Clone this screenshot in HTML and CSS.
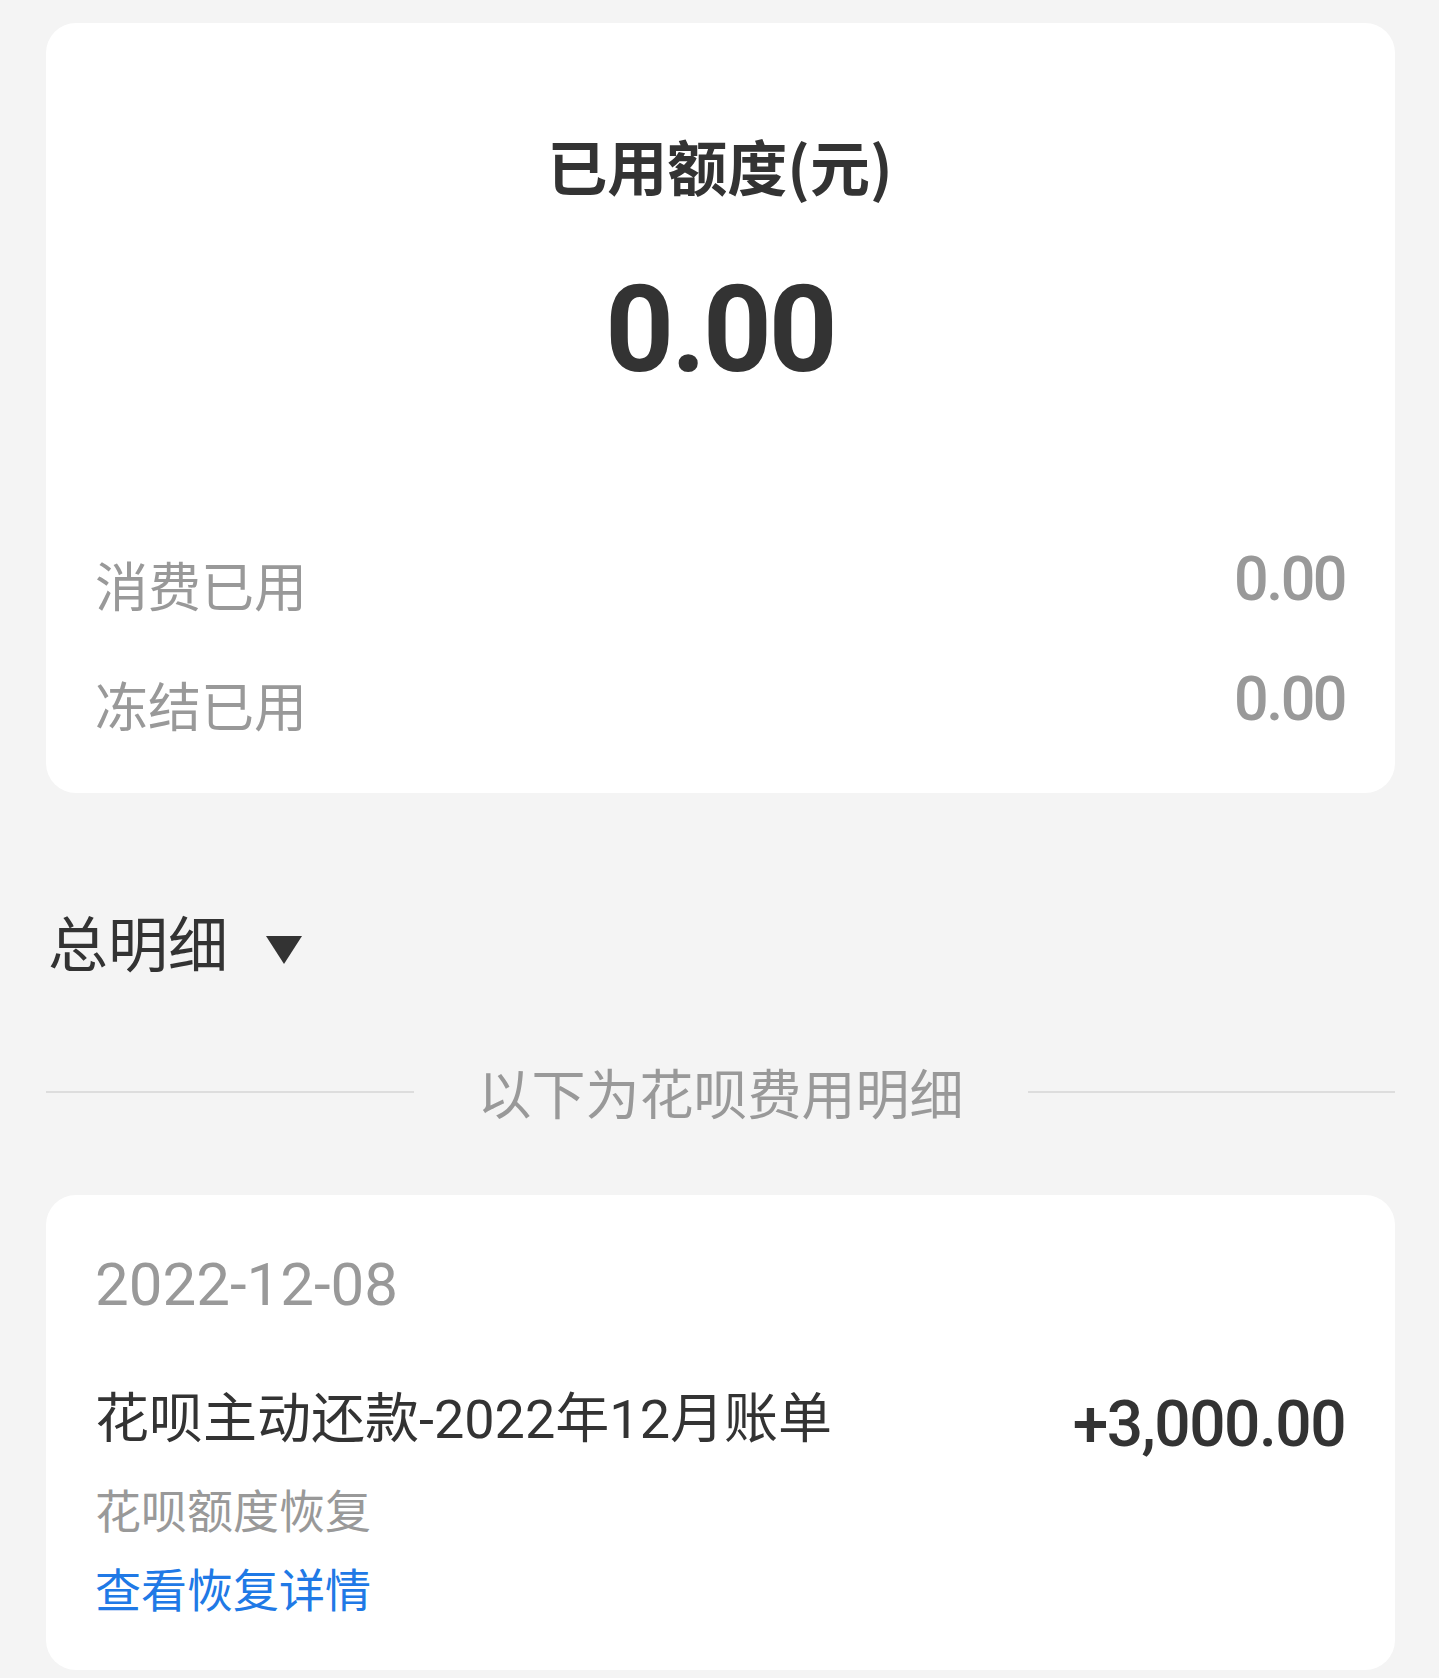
FILE: index.html
```html
<!DOCTYPE html>
<html lang="zh-CN">
<head>
    <meta charset="UTF-8">
    <meta name="viewport" content="width=device-width, initial-scale=1.0">
    <title>花呗 - 已用额度</title>
    <link rel="stylesheet" href="styles.css">
</head>
<body>
    <div class="page">
        <section class="card summary">
            <h1 class="summary-title">已用额度(元)</h1>
            <div class="summary-amount">0.00</div>

            <div class="summary-rows">
                <div class="summary-row">
                    <span class="row-label">消费已用</span>
                    <span class="row-value">0.00</span>
                </div>
                <div class="summary-row">
                    <span class="row-label">冻结已用</span>
                    <span class="row-value">0.00</span>
                </div>
            </div>
        </section>

        <div class="filter">
            <span class="filter-name">总明细</span>
            <span class="filter-arrow"></span>
        </div>

        <div class="divider">
            <span class="divider-line"></span>
            <span class="divider-text">以下为花呗费用明细</span>
            <span class="divider-line"></span>
        </div>

        <section class="card record">
            <div class="record-date">2022-12-08</div>
            <div class="record-main">
                <span class="record-name">花呗主动还款-2022年12月账单</span>
                <span class="record-amount">+3,000.00</span>
            </div>
            <div class="record-note">花呗额度恢复</div>
            <a class="record-link" href="#">查看恢复详情</a>
        </section>
    </div>
</body>
</html>
```

FILE: styles.css
```css
body {
    margin: 0;
    padding: 0;
    background-color: #f4f4f4;
    font-family: Roboto, "Noto Sans CJK SC", sans-serif;
    color: #333;
}

.page {
    padding: 23px 44px 0 46px;
}

.card {
    background-color: #fff;
    border-radius: 30px;
}

/* top summary card */
.summary {
    height: 770px;
    box-sizing: border-box;
    padding: 108px 50px 0 49px;
    text-align: center;
}

.summary-title {
    margin: 0;
    font-family: "Noto Sans CJK SC", sans-serif;
    font-size: 60px;
    font-weight: 700;
    line-height: 68px;
    color: #333;
}

.summary-amount {
    margin-top: 71px;
    font-family: Roboto, sans-serif;
    font-size: 120px;
    font-weight: 700;
    line-height: 1;
    letter-spacing: -3px;
    color: #333;
}

.summary-rows {
    margin-top: 158px;
    display: flex;
    flex-direction: column;
    gap: 48px;
}

.summary-row {
    display: flex;
    justify-content: space-between;
    align-items: center;
    height: 72px;
}

.row-label {
    font-family: "Noto Sans CJK SC", sans-serif;
    font-size: 53px;
    color: #999;
}

.row-value {
    font-family: Roboto, sans-serif;
    font-size: 61px;
    font-weight: 500;
    letter-spacing: -2.5px;
    color: #999;
    margin-top: -11px;
}

/* filter */
.filter {
    display: flex;
    align-items: center;
    gap: 38px;
    margin-top: 108px;
    padding-left: 2px;
}

.filter-name {
    font-family: "Noto Sans CJK SC", sans-serif;
    font-size: 60px;
    line-height: 80px;
    color: #333;
}

.filter-arrow {
    width: 0;
    height: 0;
    border-left: 18px solid transparent;
    border-right: 18px solid transparent;
    border-top: 28px solid #333;
    margin-top: 17px;
}

/* divider */
.divider {
    display: flex;
    align-items: center;
    gap: 64px;
    margin-top: 73px;
}

.divider-line {
    flex: 1;
    height: 2px;
    background-color: #ddd;
}

.divider-text {
    font-family: "Noto Sans CJK SC", sans-serif;
    font-size: 54px;
    line-height: 76px;
    color: #999;
}

/* record card */
.record {
    margin-top: 65px;
    height: 475px;
    box-sizing: border-box;
    padding: 50px 50px 0 49px;
}

.record-date {
    font-family: Roboto, sans-serif;
    font-size: 60px;
    line-height: 80px;
    color: #999;
}

.record-main {
    display: flex;
    justify-content: space-between;
    align-items: center;
    margin-top: 52px;
}

.record-name {
    font-size: 54px;
    line-height: 70px;
    color: #333;
}

.record-amount {
    font-family: Roboto, sans-serif;
    font-size: 64px;
    font-weight: 500;
    letter-spacing: -1.5px;
    color: #333;
    margin-top: 10px;
}

.record-note {
    margin-top: 16px;
    font-family: "Noto Sans CJK SC", sans-serif;
    font-size: 46px;
    line-height: 60px;
    color: #999;
}

.record-link {
    display: block;
    margin-top: 19px;
    font-family: "Noto Sans CJK SC", sans-serif;
    font-size: 46px;
    line-height: 60px;
    color: #2079e6;
    text-decoration: none;
}
```
